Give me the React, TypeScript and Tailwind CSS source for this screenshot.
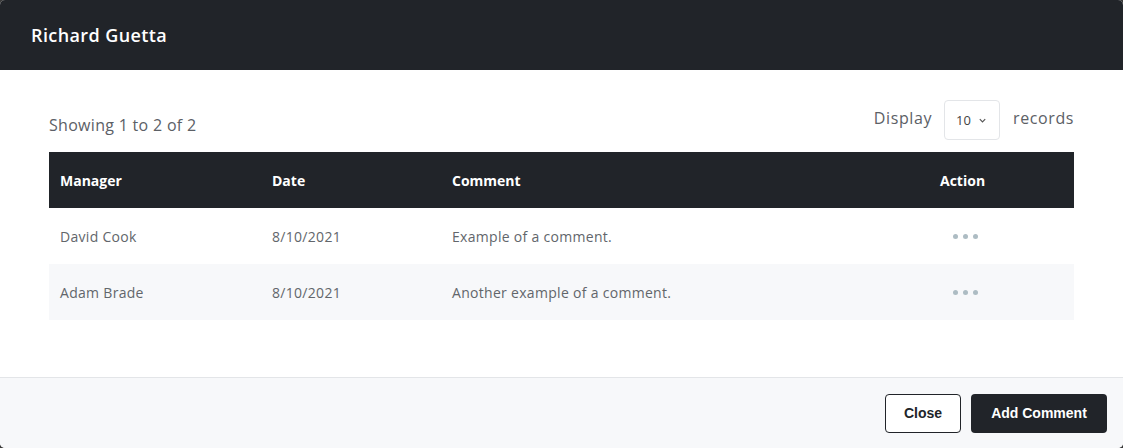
import React from "react";

const rows = [
  { manager: "David Cook", date: "8/10/2021", comment: "Example of a comment." },
  { manager: "Adam Brade", date: "8/10/2021", comment: "Another example of a comment." },
];

function Dots() {
  return (
    <div className="flex items-center gap-[5px] pl-[13px]">
      <span className="block w-[5px] h-[5px] rounded-full bg-[#adbcc3]" />
      <span className="block w-[5px] h-[5px] rounded-full bg-[#adbcc3]" />
      <span className="block w-[5px] h-[5px] rounded-full bg-[#adbcc3]" />
    </div>
  );
}

export default function App() {
  return (
    <div className="w-[1123px] h-[448px] bg-[#3a3a3a] overflow-hidden" style={{ fontFamily: "'Open Sans', 'Noto Sans', sans-serif" }}>
      <div className="w-full h-full rounded-[5px] overflow-hidden bg-white flex flex-col">
        <div className="h-[70px] bg-[#212429] flex items-center px-[31px] shrink-0">
          <h1 className="text-white text-[18px] font-semibold tracking-[0.4px]">Richard Guetta</h1>
        </div>
        <div className="flex-1 px-[49px] pt-[30px]">
          <div className="flex items-end justify-between h-[52px] pb-[12px]">
            <div className="text-[16px] tracking-[0.3px] text-[#5c6066] pb-[3px]">Showing 1 to 2 of 2</div>
            <div className="flex items-center text-[16px] tracking-[0.6px] text-[#5c6066] self-start">
              <span className="mr-[12px] mt-[-4px]">Display</span>
              <div className="w-[56px] h-[40px] border border-[#e3e5e8] rounded-[4px] flex items-center pl-[11px] gap-[7px] text-[13px] tracking-normal text-[#444]">
                <span className="mt-[2px]">10</span>
                <svg width="9" height="9" viewBox="0 0 10 10" className="mt-[1px]">
                  <path d="M2 3.5 L5 6.5 L8 3.5" fill="none" stroke="#555" strokeWidth="1.3" />
                </svg>
              </div>
              <span className="ml-[13px] mt-[-4px]">records</span>
            </div>
          </div>
          <div className="w-[1025px]">
            <div className="grid grid-cols-[212px_180px_488px_145px] h-[56px] bg-[#212429] items-center text-white text-[14px] font-bold">
              <div className="pl-[11px]">Manager</div>
              <div className="pl-[11px]">Date</div>
              <div className="pl-[11px]">Comment</div>
              <div className="pl-[11px]">Action</div>
            </div>
            {rows.map((r, i) => (
              <div
                key={i}
                className={`grid grid-cols-[212px_180px_488px_145px] h-[56px] items-center text-[14px] tracking-[0.3px] text-[#62666b] ${i % 2 === 1 ? "bg-[#f7f8fa]" : "bg-white"}`}
              >
                <div className="pl-[11px]">{r.manager}</div>
                <div className="pl-[11px]">{r.date}</div>
                <div className="pl-[11px]">{r.comment}</div>
                <div className="pl-[11px]"><Dots /></div>
              </div>
            ))}
          </div>
        </div>
        <div className="h-[71px] shrink-0 border-t border-[#e3e5e8] bg-[#f7f8fa] flex items-center justify-end gap-[10px] pr-[16px]" style={{ fontFamily: "'Liberation Sans', Arial, sans-serif" }}>
          <button className="w-[76px] h-[39px] border border-[#212429] rounded-[4px] bg-white text-[#212429] text-[14px] font-bold">Close</button>
          <button className="w-[136px] h-[39px] rounded-[4px] bg-[#212429] text-white text-[14px] font-bold">Add Comment</button>
        </div>
      </div>
    </div>
  );
}
